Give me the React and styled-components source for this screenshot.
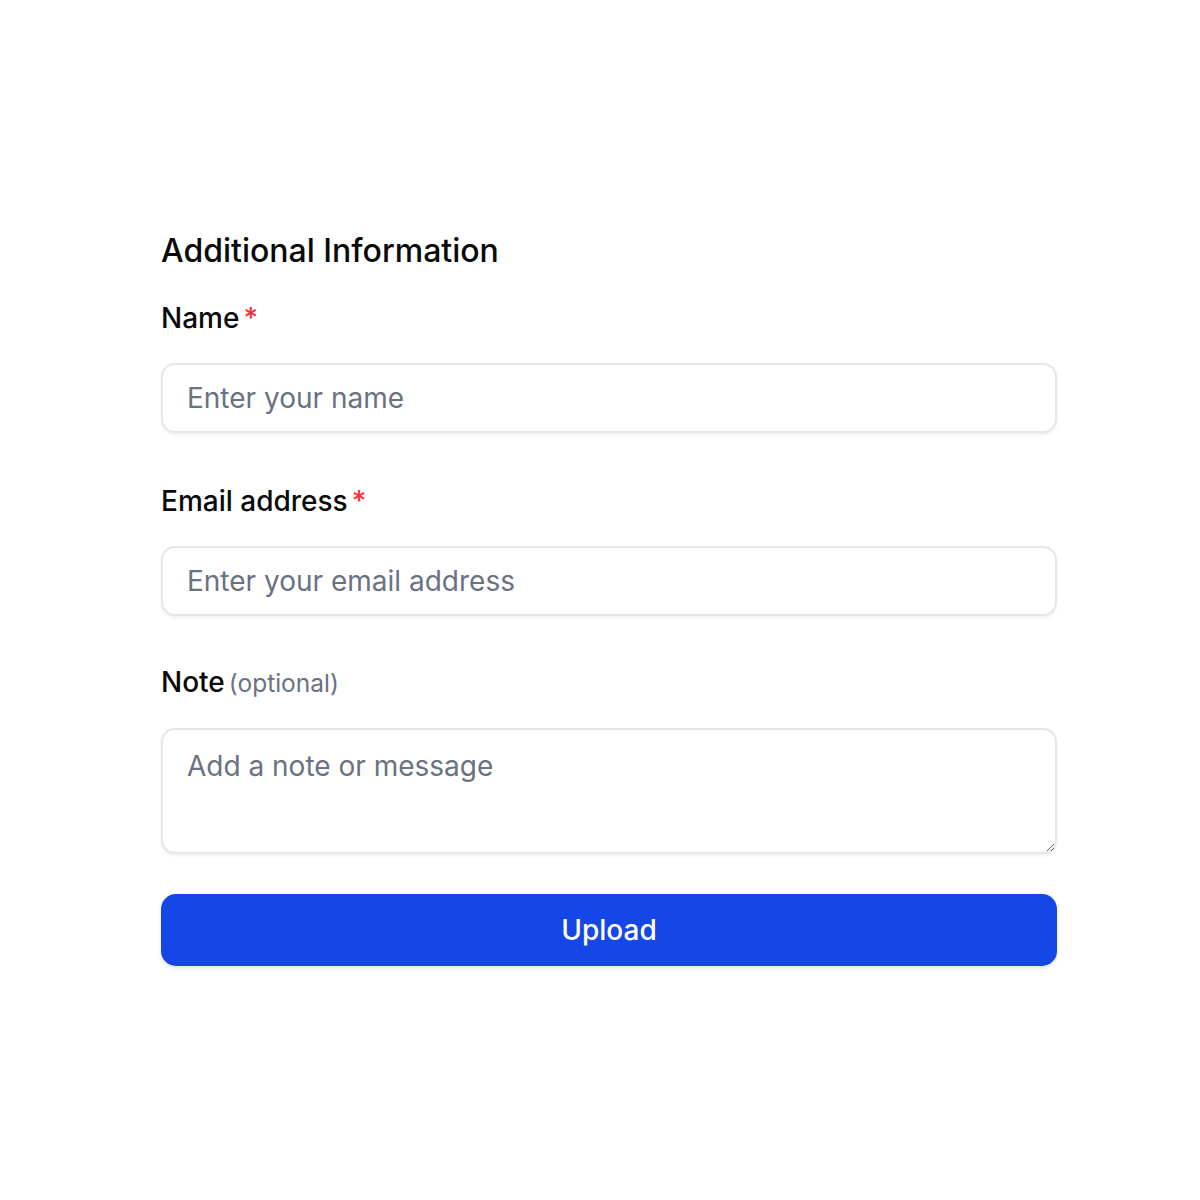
import React from "react";
import styled, { createGlobalStyle } from "styled-components";

const Global = createGlobalStyle`
  html, body { margin: 0; padding: 0; background: #ffffff; }
  body { font-family: Inter, "Noto Sans", Arial, sans-serif; color: #0a0a0a; }
  * { box-sizing: border-box; }
`;

const Page = styled.div`
  min-height: 1200px;
  display: flex;
  align-items: flex-start;
  padding: 226px 0 0 161px;
`;

const Form = styled.form`
  width: 896px;
  display: flex;
  flex-direction: column;
`;

const Title = styled.h2`
  margin: 0 0 25px;
  font-size: 32px;
  line-height: 49px;
  font-weight: 500;
  color: #0a0a0a;
`;

const Field = styled.div`
  display: flex;
  flex-direction: column;
  gap: ${(p) => p.$gap || 27}px;
  margin-bottom: ${(p) => p.$mb}px;
`;

const Label = styled.label`
  display: flex;
  align-items: baseline;
  gap: 4px;
  font-size: 28px;
  line-height: 36px;
  font-weight: 500;
  color: #0a0a0a;
`;

const Required = styled.span`
  color: #fb2c36;
  font-weight: 500;
`;

const Optional = styled.span`
  color: #6a7282;
  font-size: 24.5px;
  font-weight: 400;
`;

const fieldBase = `
  width: 100%;
  border: 2px solid #e5e7eb;
  border-radius: 14px;
  background: #ffffff;
  box-shadow: 0 1.75px 3px rgba(0, 0, 0, 0.06);
  font-family: Inter, "Noto Sans", Arial, sans-serif;
  font-size: 28px;
  color: #0a0a0a;
  padding: 0 24px;
  outline: none;
  &::placeholder { color: #6a7282; opacity: 1; }
`;

const Input = styled.input`
  ${fieldBase}
  height: 70px;
`;

const TextArea = styled.textarea`
  ${fieldBase}
  height: 126px;
  padding-top: 15px;
  line-height: 42px;
  resize: vertical;
`;

const Button = styled.button`
  height: 72px;
  border: none;
  border-radius: 15px;
  background: #1447e6;
  color: #ffffff;
  font-family: Inter, "Noto Sans", Arial, sans-serif;
  font-size: 28px;
  font-weight: 500;
  box-shadow: 0 2px 4px rgba(0, 0, 0, 0.12);
  cursor: pointer;
`;

export default function App() {
  return (
    <>
      <Global />
      <Page>
        <Form onSubmit={(e) => e.preventDefault()}>
          <Title>Additional Information</Title>
          <Field $mb={50}>
            <Label>
              Name<Required>*</Required>
            </Label>
            <Input placeholder="Enter your name" />
          </Field>
          <Field $mb={48}>
            <Label>
              Email address<Required>*</Required>
            </Label>
            <Input placeholder="Enter your email address" />
          </Field>
          <Field $mb={40}>
            <Label>
              Note<Optional>(optional)</Optional>
            </Label>
            <TextArea placeholder="Add a note or message" />
          </Field>
          <Button type="submit">Upload</Button>
        </Form>
      </Page>
    </>
  );
}
